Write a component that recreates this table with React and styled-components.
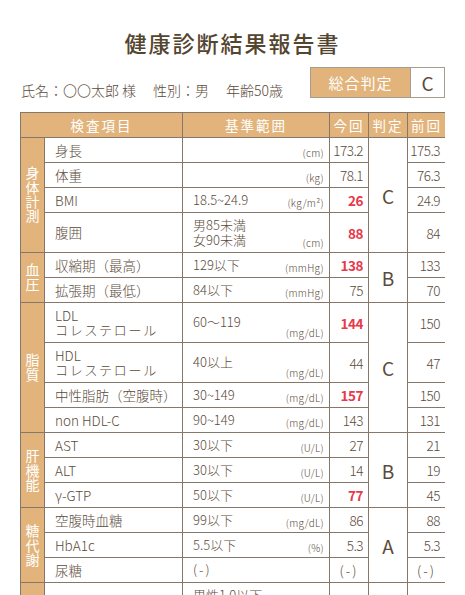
import React from 'react'
import styled, { createGlobalStyle } from 'styled-components'

const Global = createGlobalStyle`
  body {
    margin: 0;
    background: #fff;
    font-family: "Noto Sans CJK JP", "Noto Sans", sans-serif;
    font-weight: 300;
    color: #5b4b3a;
  }
`

const TAN = '#e2b47b'
const LINE = '#85786a'

const Page = styled.div`
  width: 465px;
  box-sizing: border-box;
  padding: 27px 20px 0;
`
const Title = styled.h1`
  margin: 0;
  text-align: center;
  font-size: 22px;
  font-weight: 500;
  line-height: 30px;
  letter-spacing: 2px;
  color: #54452f;
`
const InfoRow = styled.div`
  display: flex;
  justify-content: space-between;
  align-items: flex-end;
  margin-top: 10px;
`
const Info = styled.div`
  display: flex;
  gap: 17px;
  padding-left: 1px;
  font-size: 14px;
  line-height: 14px;
  margin-bottom: 1px;
`
const Overall = styled.div`
  display: flex;
  height: 31px;
  box-sizing: border-box;
  border: 1px solid #a59d90;
`
const OverallLabel = styled.div`
  width: 99px;
  background: ${TAN};
  color: #fff;
  display: flex;
  align-items: center;
  justify-content: center;
  font-size: 15px;
  font-weight: 400;
  letter-spacing: 1px;
`
const OverallValue = styled.div`
  width: 33px;
  display: flex;
  align-items: center;
  justify-content: center;
  font-size: 19px;
  font-weight: 400;
  border-left: 1px solid #a59d90;
`
const Grid = styled.div`
  margin-top: 14px;
  display: grid;
  grid-template-columns: 23px 137px 146px 38px 38px 37px;
  grid-template-rows: ${p => p.$rows};
  gap: 1px;
  padding: 1px;
  background: ${LINE};
`
const HeadCell = styled.div`
  grid-column: span ${p => p.$span || 1};
  background: ${TAN};
  color: #fff;
  display: flex;
  align-items: center;
  justify-content: center;
  font-size: 13.5px;
  font-weight: 400;
  letter-spacing: 2px;
`
const GroupCell = styled.div`
  grid-row: span ${p => p.$span};
  background: ${TAN};
  display: flex;
  align-items: center;
  justify-content: center;
`
const GroupLabel = styled.span`
  writing-mode: vertical-rl;
  text-orientation: upright;
  color: #fff;
  font-size: 14px;
  font-weight: 400;
  line-height: 1;
  letter-spacing: 0.3px;
`
const ItemCell = styled.div`
  background: #fff;
  display: flex;
  flex-direction: column;
  justify-content: center;
  padding-left: 10px;
  font-size: 13.5px;
  line-height: 14.5px;
`
const Kana = styled.span`
  font-size: 13px;
  letter-spacing: 1.7px;
`
const RangeCell = styled.div`
  background: #fff;
  display: flex;
  justify-content: space-between;
  padding: 0 5px 0 10px;
`
const RangeText = styled.div`
  align-self: center;
  font-size: 13px;
  line-height: 14.5px;
  letter-spacing: ${p => (p.$spaced ? 2 : 0)}px;
`
const Unit = styled.span`
  align-self: flex-end;
  margin-bottom: 4px;
  font-size: 10px;
  line-height: 10px;
  letter-spacing: 0.3px;
`
const ValueCell = styled.div`
  background: #fff;
  display: flex;
  align-items: center;
  justify-content: ${p => (p.$center ? 'center' : 'flex-end')};
  padding-right: ${p => (p.$center ? 0 : 5)}px;
  font-size: 13.5px;
  letter-spacing: ${p => (p.$center ? 2 : -0.5)}px;
  color: ${p => (p.$high ? '#e8384a' : 'inherit')};
  font-weight: ${p => (p.$high ? 700 : 300)};
`
const JudgeCell = styled.div`
  grid-row: span ${p => p.$span};
  background: #fff;
  display: flex;
  align-items: center;
  justify-content: center;
  font-size: 19px;
  font-weight: 400;
`

const groups = [
  { name: '身体計測', judge: 'C', rows: [
    { item: '身長', unit: '(cm)', now: '173.2', prev: '175.3' },
    { item: '体重', unit: '(kg)', now: '78.1', prev: '76.3' },
    { item: 'BMI', range: '18.5~24.9', unit: '(kg/m²)', now: '26', prev: '24.9', high: true },
    { item: '腹囲', range: ['男85未満', '女90未満'], unit: '(cm)', now: '88', prev: '84', high: true, tall: true },
  ] },
  { name: '血圧', judge: 'B', rows: [
    { item: '収縮期（最高）', range: '129以下', unit: '(mmHg)', now: '138', prev: '133', high: true },
    { item: '拡張期（最低）', range: '84以下', unit: '(mmHg)', now: '75', prev: '70' },
  ] },
  { name: '脂質', judge: 'C', rows: [
    { item: ['LDL', 'コレステロール'], range: '60〜119', unit: '(mg/dL)', now: '144', prev: '150', high: true, tall: true },
    { item: ['HDL', 'コレステロール'], range: '40以上', unit: '(mg/dL)', now: '44', prev: '47', tall: true },
    { item: '中性脂肪（空腹時）', range: '30~149', unit: '(mg/dL)', now: '157', prev: '150', high: true },
    { item: 'non HDL-C', range: '90~149', unit: '(mg/dL)', now: '143', prev: '131' },
  ] },
  { name: '肝機能', judge: 'B', rows: [
    { item: 'AST', range: '30以下', unit: '(U/L)', now: '27', prev: '21' },
    { item: 'ALT', range: '30以下', unit: '(U/L)', now: '14', prev: '19' },
    { item: 'γ-GTP', range: '50以下', unit: '(U/L)', now: '77', prev: '45', high: true },
  ] },
  { name: '糖代謝', judge: 'A', rows: [
    { item: '空腹時血糖', range: '99以下', unit: '(mg/dL)', now: '86', prev: '88' },
    { item: 'HbA1c', range: '5.5以下', unit: '(%)', now: '5.3', prev: '5.3' },
    { item: '尿糖', range: '(-)', now: '(-)', prev: '(-)', center: true },
  ] },
  { name: '腎機能', judge: 'A', rows: [
    { item: 'クレアチニン', range: ['男性1.0以下', '女性0.7以下'], unit: '(mg/dL)', now: '0.92', prev: '0.88', tall: true },
    { item: 'eGFR', range: '60以上', unit: '', now: '68.4', prev: '70.1' },
  ] },
]

const lines = v => (Array.isArray(v) ? v : [v])

export default function App() {
  const heights = ['24px']
  groups.forEach(g => g.rows.forEach(r => heights.push(r.tall ? '39px' : '24px')))

  return (
    <Page>
      <Global />
      <Title>健康診断結果報告書</Title>
      <InfoRow>
        <Info>
          <span>氏名：〇〇太郎 様</span>
          <span>性別：男</span>
          <span>年齢50歳</span>
        </Info>
        <Overall>
          <OverallLabel>総合判定</OverallLabel>
          <OverallValue>C</OverallValue>
        </Overall>
      </InfoRow>

      <Grid $rows={heights.join(' ')}>
        <HeadCell $span={2}>検査項目</HeadCell>
        <HeadCell>基準範囲</HeadCell>
        <HeadCell>今回</HeadCell>
        <HeadCell>判定</HeadCell>
        <HeadCell>前回</HeadCell>

        {groups.map(g =>
          g.rows.map((r, i) => (
            <React.Fragment key={g.name + i}>
              {i === 0 && (
                <GroupCell $span={g.rows.length}>
                  <GroupLabel>{g.name}</GroupLabel>
                </GroupCell>
              )}
              <ItemCell>
                {lines(r.item).map((t, k) => (k > 0 ? <Kana key={k}>{t}</Kana> : <span key={k}>{t}</span>))}
              </ItemCell>
              <RangeCell>
                <RangeText $spaced={r.center}>
                  {lines(r.range || '').map((t, k) => <div key={k}>{t}</div>)}
                </RangeText>
                {r.unit && <Unit>{r.unit}</Unit>}
              </RangeCell>
              <ValueCell $high={r.high} $center={r.center}>{r.now}</ValueCell>
              {i === 0 && <JudgeCell $span={g.rows.length}>{g.judge}</JudgeCell>}
              <ValueCell $center={r.center}>{r.prev}</ValueCell>
            </React.Fragment>
          ))
        )}
      </Grid>
    </Page>
  )
}
